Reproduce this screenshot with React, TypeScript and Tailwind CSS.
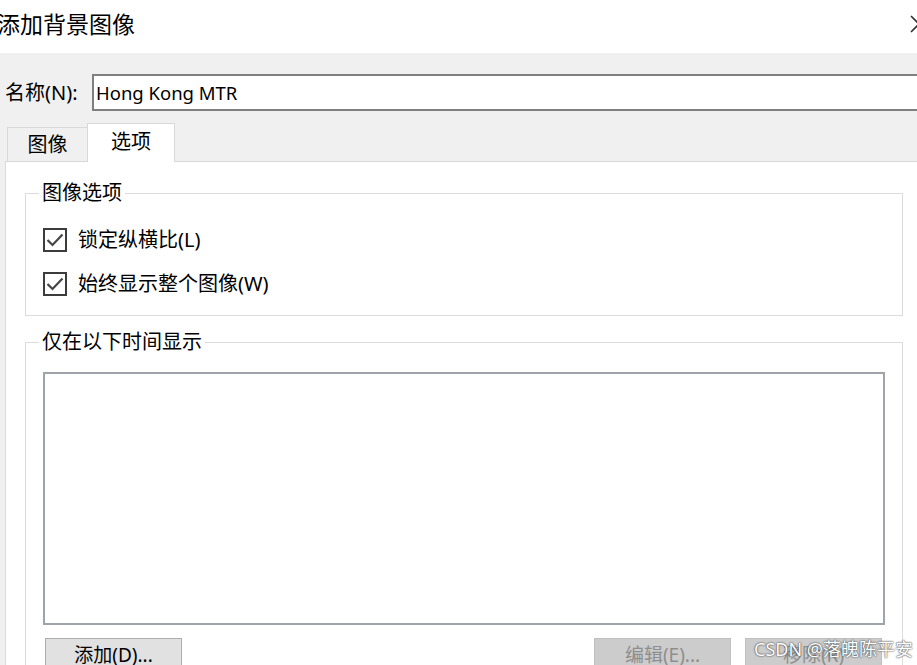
import React from 'react';

const font = "font-['Noto_Sans','Noto_Sans_CJK_SC',sans-serif]";

function Check({ label }: { label: string }) {
  return (
    <div className="flex items-center h-[24px]">
      <span className="w-[24px] h-[24px] border-2 border-[#3c3c3c] bg-white flex items-center justify-center">
        <svg width="20" height="20" viewBox="0 0 20 20">
          <polyline points="2.5,10 7.5,15 17.5,4.5" fill="none" stroke="#454545" strokeWidth="2.2" />
        </svg>
      </span>
      <span className="ml-[11px] text-[20px] leading-[24px]">{label}</span>
    </div>
  );
}

function Button({ label, disabled, className }: { label: string; disabled?: boolean; className?: string }) {
  return (
    <div
      className={
        'w-[137px] h-[34px] border flex items-center justify-center text-[19px] ' +
        (disabled ? 'bg-[#cccccc] border-[#bfbfbf] text-[#8e8e8e] ' : 'bg-[#e1e1e1] border-[#adadad] text-black ') +
        (className ?? '')
      }
    >
      {label}
    </div>
  );
}

export default function App() {
  return (
    <div className={`w-[917px] h-[665px] overflow-hidden bg-[#f0f0f0] text-black relative ${font}`}>
      {/* title bar */}
      <div className="h-[53px] bg-white flex items-center justify-between">
        <span className="ml-[-3px] text-[23px] leading-none pb-[5px]">添加背景图像</span>
        <svg width="18" height="18" viewBox="0 0 18 18" className="mr-[-11px] mb-[5px]">
          <path d="M1 1 L17 17 M17 1 L1 17" stroke="#333" strokeWidth="1.6" fill="none" />
        </svg>
      </div>

      {/* name row */}
      <div className="mt-[21px] flex items-center">
        <span className="w-[92px] pl-[5px] text-[20px] shrink-0">名称(N):</span>
        <div className="w-[860px] shrink-0 h-[37px] bg-white border-2 border-[#7f7f7f] flex items-center pl-[2px] text-[18.5px]">
          Hong Kong MTR
        </div>
      </div>

      {/* tabs */}
      <div className="mt-[12px] h-[38px] flex items-end pl-[7px]">
        <div className="w-[80px] h-[34px] border border-b-0 border-r-0 border-[#d9d9d9] flex items-center justify-center text-[20px]">
          图像
        </div>
        <div className="relative z-10 w-[88px] h-[39px] mb-[-1px] bg-white border border-b-0 border-[#d9d9d9] flex items-center justify-center text-[20px] pb-[2px]">
          选项
        </div>
      </div>

      {/* tab panel */}
      <div className="ml-[5px] h-[600px] bg-white border-l border-t border-[#d9d9d9] pl-[19px] pt-[19px]">
        <fieldset className="w-[878px] border border-[#dcdcdc] p-0 m-0">
          <legend className="ml-[13px] px-[3px] text-[20px] leading-[24px]">图像选项</legend>
          <div className="pl-[17px] pt-[23px] pb-[19px] flex flex-col gap-[20px]">
            <Check label="锁定纵横比(L)" />
            <Check label="始终显示整个图像(W)" />
          </div>
        </fieldset>

        <fieldset className="mt-[14px] w-[878px] h-[400px] border border-[#dcdcdc] p-0 m-0">
          <legend className="ml-[13px] px-[3px] text-[20px] leading-[24px]">仅在以下时间显示</legend>
          <div className="pl-[17px] pr-[17px] pt-[18px]">
            <div className="h-[253px] bg-white border-2 border-[#a0a3a9]" />
            <div className="mt-[13px] flex items-start pl-[2px] pr-[3px]">
              <Button label="添加(D)..." />
              <div className="flex-1" />
              <Button label="编辑(E)..." disabled />
              <Button label="移除(R)" disabled className="ml-[14px]" />
            </div>
          </div>
        </fieldset>
      </div>

      {/* watermark */}
      <span className="absolute right-[4px] top-[636px] text-[18px] text-white [text-shadow:0_0_2px_#444,0_0_1px_#444]">
        CSDN @落魄陈平安
      </span>
    </div>
  );
}
